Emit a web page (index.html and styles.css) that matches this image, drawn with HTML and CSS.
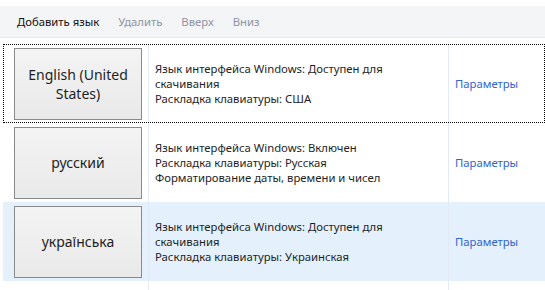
FILE: index.html
```html
<!DOCTYPE html>
<html lang="ru">
<head>
    <meta charset="UTF-8">
    <title>Язык</title>
    <link rel="stylesheet" href="styles.css">
</head>
<body>
    <div class="toolbar">
        <span class="tool">Добавить язык</span>
        <span class="tool disabled">Удалить</span>
        <span class="tool disabled">Вверх</span>
        <span class="tool disabled">Вниз</span>
    </div>

    <div class="lang-list">
        <div class="row focused">
            <div class="cell name"><div class="lang-button">English (United States)</div></div>
            <div class="cell info">
                <div>Язык интерфейса Windows: Доступен для скачивания</div>
                <div>Раскладка клавиатуры: США</div>
            </div>
            <div class="cell opts"><span class="link">Параметры</span></div>
        </div>
        <div class="row">
            <div class="cell name"><div class="lang-button">русский</div></div>
            <div class="cell info">
                <div>Язык интерфейса Windows: Включен</div>
                <div>Раскладка клавиатуры: Русская</div>
                <div>Форматирование даты, времени и чисел</div>
            </div>
            <div class="cell opts"><span class="link">Параметры</span></div>
        </div>
        <div class="row hover">
            <div class="cell name"><div class="lang-button">українська</div></div>
            <div class="cell info">
                <div>Язык интерфейса Windows: Доступен для скачивания</div>
                <div>Раскладка клавиатуры: Украинская</div>
            </div>
            <div class="cell opts"><span class="link">Параметры</span></div>
        </div>
        <div class="row filler">
            <div class="cell name"></div>
            <div class="cell info"></div>
            <div class="cell opts"></div>
        </div>
    </div>
</body>
</html>
```

FILE: styles.css
```css
html, body {
    height: 100%;
}
body {
    margin: 0;
    display: flex;
    flex-direction: column;
    font-family: "Noto Sans", "Open Sans", sans-serif;
    font-size: 11.3px;
    color: #1e1e1e;
    background-color: #fff;
    overflow: hidden;
}
.toolbar {
    margin-top: 6px;
    height: 31px;
    display: flex;
    align-items: center;
    padding-left: 17px;
    gap: 19px;
    background-color: #f4f5f6;
    border-bottom: 1px solid #e6e7e8;
}
.tool {
    color: #111;
}
.tool.disabled {
    color: #8f94a3;
}
.lang-list {
    flex: 1;
    display: flex;
    flex-direction: column;
    margin-top: 6px;
    margin-left: 3px;
}
.row {
    display: flex;
    height: 79px;
}
.row.focused {
    outline: 1px dotted #000;
    outline-offset: -1px;
}
.row.hover {
    background-color: #e4f1fc;
}
.row.filler {
    flex: 1;
}
.cell {
    display: flex;
    align-items: center;
    border-right: 1px solid #e2eaf6;
}
.cell.name {
    width: 146px;
    padding-left: 11px;
    box-sizing: border-box;
}
.cell.info {
    width: 300px;
    padding-left: 6px;
    padding-right: 14px;
    box-sizing: border-box;
    flex-direction: column;
    align-items: flex-start;
    justify-content: center;
    line-height: 15px;
}
.cell.opts {
    flex: 1;
    padding-left: 6px;
    border-right: none;
}
.lang-button {
    width: 128px;
    height: 72px;
    box-sizing: border-box;
    border: 1px solid #8a8a8a;
    background: linear-gradient(#f4f4f4, #e9e9e9);
    display: flex;
    align-items: center;
    justify-content: center;
    text-align: center;
    font-size: 14px;
    line-height: 19px;
    padding: 0 6px;
    color: #1e1e1e;
}
.link {
    color: #3064d0;
}
```
